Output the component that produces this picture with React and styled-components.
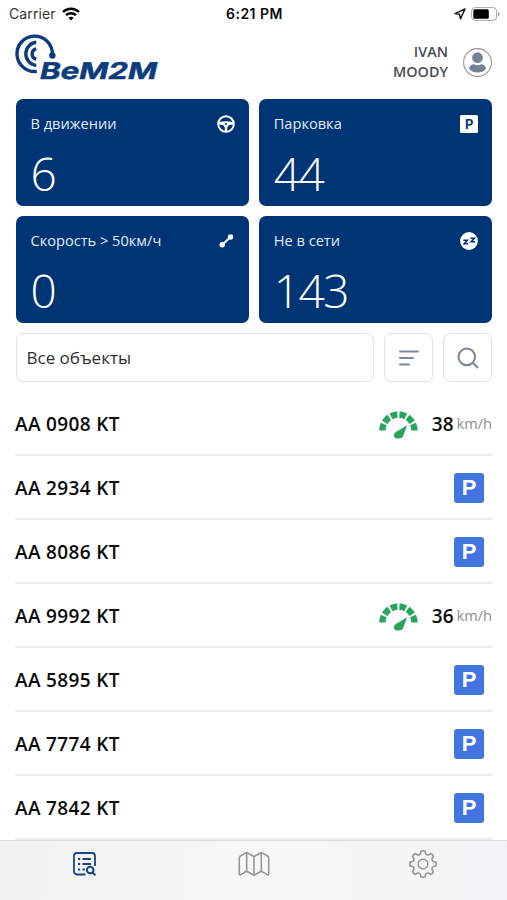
import { createGlobalStyle, styled } from "styled-components";

const GlobalStyle = createGlobalStyle`
  * {
    box-sizing: border-box;
  }

  body {
    margin: 0;
    background: #fff;
    font-family: "Open Sans", "Noto Sans", sans-serif;
    color: #0a0a0a;
  }

  svg {
    display: block;
    flex-shrink: 0;
  }
`;

const Screen = styled.div`
  display: flex;
  flex-direction: column;
  width: 507px;
  height: 900px;
  overflow: hidden;
`;

const StatusBar = styled.div`
  display: grid;
  grid-template-columns: 1fr auto 1fr;
  align-items: center;
  height: 27px;
  padding: 0 7px 0 9px;
  font-family: Inter, sans-serif;
  font-size: 14px;
`;

const Carrier = styled.div`
  display: flex;
  align-items: center;
  gap: 6px;
  color: #333;
  letter-spacing: 0.1px;
`;

const Time = styled.div`
  font-size: 14px;
  font-weight: 600;
  letter-spacing: 0.5px;
`;

const Indicators = styled.div`
  display: flex;
  align-items: center;
  justify-content: flex-end;
  gap: 5px;
`;

const Header = styled.header`
  display: flex;
  justify-content: space-between;
  height: 72px;
  padding: 7px 15px 0;
`;

const User = styled.div`
  display: flex;
  align-items: center;
  gap: 15px;
  height: 56px;
`;

const UserName = styled.div`
  width: 70px;
  color: #494c51;
  font-size: 14.4px;
  font-weight: 600;
  line-height: 20px;
  text-align: right;
`;

const Cards = styled.section`
  display: grid;
  grid-template-columns: 1fr 1fr;
  grid-auto-rows: 107px;
  gap: 10px;
  padding: 0 15px 0 15.5px;
`;

const Card = styled.div`
  display: flex;
  flex-direction: column;
  justify-content: space-between;
  padding: 15px 14px 2px 15px;
  border-radius: 7px;
  background: #003575;
  color: #fff;
`;

const CardTop = styled.div`
  display: flex;
  align-items: center;
  justify-content: space-between;
  height: 20px;
  color: #e3ebf5;
  font-size: 14.6px;
  line-height: 18px;
`;

const CardLabel = styled.span`
  padding-bottom: 2px;
`;

const CardValue = styled.div`
  font-size: 46px;
  font-weight: 300;
  line-height: 62px;
  letter-spacing: -1.5px;
`;

const Filters = styled.div`
  display: flex;
  gap: 10px;
  height: 49px;
  margin: 10px 15px 10px 15.5px;
`;

const Box = styled.div`
  display: flex;
  align-items: center;
  border: 1px solid #dfe1e6;
  border-radius: 7px;
`;

const Select = styled(Box)`
  flex: 1;
  padding-left: 10px;
  color: #2e2e2e;
  font-size: 17px;
`;

const IconButton = styled(Box)`
  justify-content: center;
  width: 49px;
`;

const List = styled.div`
  padding: 0 15px;
`;

const Row = styled.div`
  display: flex;
  align-items: center;
  justify-content: space-between;
  height: 64px;
  padding-top: 2px;
  border-bottom: 2px solid #ededee;
`;

const Plate = styled.div`
  font-size: 19px;
  font-weight: 600;
  letter-spacing: 0.35px;
`;

const Speed = styled.div`
  display: flex;
  align-items: center;
`;

const SpeedValue = styled.span`
  margin: 0 3px 0 14px;
  font-size: 19px;
  font-weight: 600;
`;

const Unit = styled.span`
  padding-bottom: 2px;
  color: #8b8e93;
  font-size: 14.6px;
`;

const Parking = styled.div`
  display: grid;
  place-items: center;
  width: 30px;
  height: 30px;
  margin-right: 8px;
  border-radius: 3px;
  background: #4374e0;
  color: #fff;
  font-family: "Liberation Sans", sans-serif;
  font-size: 22px;
  font-weight: 700;
  line-height: 30px;
`;

const TabBar = styled.nav`
  display: grid;
  grid-template-columns: repeat(3, 1fr);
  flex: 1;
  border-top: 1px solid #dcdcdd;
  background: linear-gradient(90deg, #f2f2f2, #f8f7f8 50%, #f5f5f7 75%, #f0f3f8);
`;

const Tab = styled.div`
  display: flex;
  justify-content: center;
  height: 45px;
  align-items: center;
  color: ${({ $active }) => ($active ? "#174582" : "#97979a")};
`;

const WifiIcon = () => (
  <svg width="18" height="14" viewBox="0 0 18 14" fill="none" stroke="#000" strokeWidth="2.4">
    <path d="M1 5a11.5 11.5 0 0 1 16 0" />
    <path d="M4 8.2a7.2 7.2 0 0 1 10 0" />
    <path d="M6.4 10.8a3.9 3.9 0 0 1 5.2 0L9 13.6z" fill="#000" stroke="none" />
  </svg>
);

const LocationIcon = () => (
  <svg width="12" height="12" viewBox="0 0 12 12" fill="none" stroke="#111" strokeWidth="1.4">
    <path d="M11 1 1 5.6l4.6.7.9 4.6z" strokeLinejoin="round" />
  </svg>
);

const BatteryIcon = () => (
  <svg width="29" height="14" viewBox="0 0 29 14">
    <rect x=".6" y=".6" width="25" height="12.8" rx="3.5" fill="none" stroke="#a5a5a5" />
    <rect x="2.3" y="2.3" width="15.5" height="9.4" rx="1.5" />
    <path d="M27 4.7c2.1.8 2.1 3.8 0 4.6z" fill="#a5a5a5" />
  </svg>
);

const Logo = () => (
  <svg width="146" height="50" viewBox="0 0 146 50">
    <g fill="none" stroke="#0b3c7c" strokeWidth="3.4">
      <path d="M21.8 37.400A17.700 17.700 0 1 1 37.400 20" />
      <path d="M21.300 31.400a11.600 11.600 0 0 1 0-23.100" />
      <path d="M21.300 25a5.200 5.200 0 0 1 0-10.200" />
    </g>
    <circle cx="37.4" cy="21.500" r="3.200" fill="#0b3c7c" />
    <text
      transform="translate(23.5 45) skewX(-13)"
      fill="#0b3c7c"
      stroke="#0b3c7c"
      strokeWidth=".5"
      fontFamily="Inter, sans-serif"
      fontSize="23"
      fontWeight="700"
      textLength="117"
      lengthAdjust="spacingAndGlyphs"
    >
      BeM2M
    </text>
  </svg>
);

const AvatarIcon = () => (
  <svg width="29" height="29" viewBox="0 0 29 29">
    <circle cx="14.5" cy="14.5" r="13.9" fill="#fff" stroke="#8f959c" strokeWidth="1.1" />
    <circle cx="14.5" cy="9.7" r="5.4" fill="#778395" />
    <path d="M5.8 20.3c1-2.6 3-4 5-4.1 2.4 1.3 5 1.3 7.4 0 2 .1 4 1.5 5 4.1-2 2.9-5 4.3-8.700 4.300s-6.700-1.400-8.700-4.300z" fill="#778395" />
  </svg>
);

const WheelIcon = () => (
  <svg width="18" height="18" viewBox="0 0 18 18" fill="none" stroke="#fff">
    <circle cx="9" cy="9" r="7.8" strokeWidth="2" />
    <path d="M1.500 7.300Q9 5 16.500 7.300V9.200L11.800 10.300 10.200 12.500V16H7.800V12.500L6.200 10.300 1.500 9.200z" fill="#fff" stroke="none" />
    <circle cx="9" cy="9" r="1" fill="#003575" stroke="none" />
  </svg>
);

const ParkingIcon = () => (
  <svg width="18" height="18" viewBox="0 0 18 18">
    <rect width="18" height="18" rx="1.5" fill="#fff" />
    <text x="9.2" y="13.6" fill="#003575" textAnchor="middle" fontFamily="Inter, sans-serif" fontSize="13" fontWeight="700">
      P
    </text>
  </svg>
);

const RouteIcon = () => (
  <svg width="16" height="14" viewBox="0 0 16 14" fill="#fff">
    <path d="M3 11 11.5 3" stroke="#fff" strokeWidth="2" />
    <circle cx="3.2" cy="10.8" r="2.7" />
    <circle cx="11.5" cy="3" r="2.7" />
  </svg>
);

const SleepIcon = () => (
  <svg width="18" height="18" viewBox="0 0 18 18">
    <circle cx="9" cy="9" r="8.9" fill="#fff" />
    <g fill="none" stroke="#003575" strokeWidth="1.6">
      <path d="M3.300 8.300h4L4.200 11.800H8" />
      <path d="M10.300 6.300h4L11.200 9.800H15" />
    </g>
  </svg>
);

const SortIcon = () => (
  <svg width="22" height="18" viewBox="0 0 22 18" fill="none" stroke="#7c8798" strokeWidth="2" strokeLinecap="round">
    <path d="M2 2.500h18M2 9h13M2 15.500h9" />
  </svg>
);

const SearchIcon = () => (
  <svg width="22" height="22" viewBox="0 0 22 22" fill="none" stroke="#7c8798" strokeWidth="2.1">
    <circle cx="9.8" cy="9.8" r="8.3" />
    <path d="m15.600 15.600 5.400 5.400" />
  </svg>
);

const GaugeIcon = () => (
  <svg width="39" height="30" viewBox="0 0 39 30">
    <path
      d="M3.400 21.500a16 16 0 0 1 32 0"
      pathLength="100"
      fill="none"
      stroke="#28a660"
      strokeWidth="6.4"
      strokeDasharray="13.2 4.160"
    />
    <path d="M28.200 16 24.200 27c-.9 2.200-2.700 2.700-5.200 2.600-3.500 0-5-2.500-3.500-5.200.9-1.500 2-1.900 3.600-2.600z" fill="#28a660" />
  </svg>
);

const ListIcon = () => (
  <svg width="23" height="24" viewBox="0 0 23 24" fill="none" stroke="currentColor" strokeWidth="1.8">
    <path d="M12.500 22.500H4a3 3 0 0 1-3-3V4a3 3 0 0 1 3-3h15a3 3 0 0 1 3 3v10" />
    <path d="M5 7h2.200M9.500 7h8.500M5 12h2.200M9.500 12h8.500M5 17.500h2.200M9.500 17.500h2.500" strokeWidth="1.9" />
    <circle cx="17.2" cy="18" r="3.300" strokeWidth="2" />
    <path d="m19.600 20.500 2.800 2.800" strokeWidth="2" />
  </svg>
);

const MapIcon = () => (
  <svg width="32" height="26" viewBox="0 0 32 26" fill="none" stroke="currentColor" strokeWidth="1.6" strokeLinejoin="round">
    <path d="M8.700 1.500 16 5.500l7.300-4 6 3.200q1.400.8 1.400 2.200v15.900q0 1.600-1.400.8l-6-3.400-7.300 4-7.300-4-6 3.400q-1.400.8-1.400-.8V6.900q0-1.400 1.400-2.200z" />
    <path d="M8.700 1.500v18.700M16 5.500v18.700M23.300 1.500v18.700" />
  </svg>
);

// Eight teeth with rounded valleys between them
const gearOutline =
  Array.from({ length: 8 }, (_, i) => {
    const at = (deg, r) => {
      const a = ((i * 45 + deg) * Math.PI) / 180;
      return `${(14 + r * Math.sin(a)).toFixed(2)} ${(14 - r * Math.cos(a)).toFixed(2)}`;
    };
    return `${i ? "L" : "M"}${at(-9, 13)}Q${at(0, 13.6)} ${at(9, 13)}L${at(13, 10.8)}Q${at(22.5, 9.4)} ${at(32, 10.8)}`;
  }).join("") + "Z";

const GearIcon = () => (
  <svg width="28" height="28" viewBox="0 0 28 28" fill="none" stroke="currentColor" strokeWidth="1.6" strokeLinejoin="round">
    <path d={gearOutline} />
    <circle cx="14" cy="14" r="4.8" />
  </svg>
);

const cards = [
  { label: "В движении", value: 6, icon: <WheelIcon /> },
  { label: "Парковка", value: 44, icon: <ParkingIcon /> },
  { label: "Скорость > 50км/ч", value: 0, icon: <RouteIcon /> },
  { label: "Не в сети", value: 143, icon: <SleepIcon /> },
];

const vehicles = [
  { plate: "AA 0908 KT", speed: 38 },
  { plate: "AA 2934 KT" },
  { plate: "AA 8086 KT" },
  { plate: "AA 9992 KT", speed: 36 },
  { plate: "AA 5895 KT" },
  { plate: "AA 7774 KT" },
  { plate: "AA 7842 KT" },
];

const Vehicle = ({ plate, speed }) => (
  <Row>
    <Plate>{plate}</Plate>
    {speed ? (
      <Speed>
        <GaugeIcon />
        <SpeedValue>{speed}</SpeedValue>
        <Unit>km/h</Unit>
      </Speed>
    ) : (
      <Parking>P</Parking>
    )}
  </Row>
);

export default function App() {
  return (
    <Screen>
      <GlobalStyle />
      <StatusBar>
        <Carrier>
          Carrier
          <WifiIcon />
        </Carrier>
        <Time>6:21 PM</Time>
        <Indicators>
          <LocationIcon />
          <BatteryIcon />
        </Indicators>
      </StatusBar>
      <Header>
        <Logo />
        <User>
          <UserName>IVAN MOODY</UserName>
          <AvatarIcon />
        </User>
      </Header>
      <Cards>
        {cards.map(({ label, value, icon }) => (
          <Card key={label}>
            <CardTop>
              <CardLabel>{label}</CardLabel>
              {icon}
            </CardTop>
            <CardValue>{value}</CardValue>
          </Card>
        ))}
      </Cards>
      <Filters>
        <Select>Все объекты</Select>
        <IconButton>
          <SortIcon />
        </IconButton>
        <IconButton>
          <SearchIcon />
        </IconButton>
      </Filters>
      <List>
        {vehicles.map((vehicle) => (
          <Vehicle key={vehicle.plate} {...vehicle} />
        ))}
      </List>
      <TabBar>
        <Tab $active>
          <ListIcon />
        </Tab>
        <Tab>
          <MapIcon />
        </Tab>
        <Tab>
          <GearIcon />
        </Tab>
      </TabBar>
    </Screen>
  );
}
